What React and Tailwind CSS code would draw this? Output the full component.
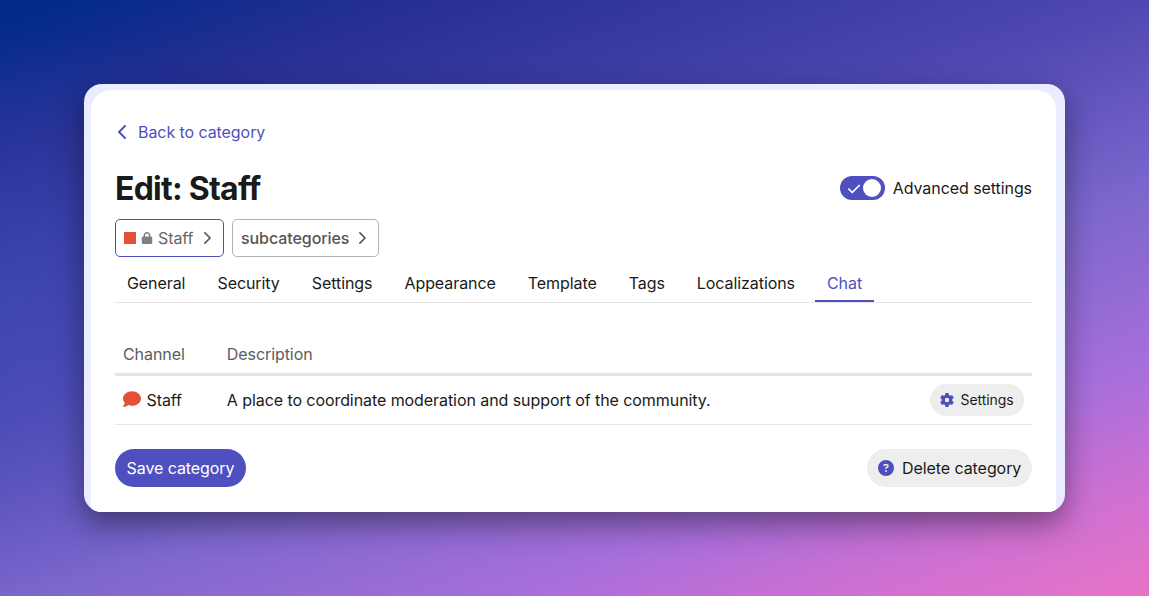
import React from "react";
import { FaCheck, FaLock, FaComment, FaGear, FaCircleQuestion } from "react-icons/fa6";

const tabs = [
  "General",
  "Security",
  "Settings",
  "Appearance",
  "Template",
  "Tags",
  "Localizations",
  "Chat",
];

function Chevron({ left = false, className }) {
  return (
    <svg
      viewBox="0 0 8 14"
      fill="none"
      stroke="currentColor"
      strokeWidth="1.9"
      strokeLinecap="round"
      strokeLinejoin="round"
      className={className}
    >
      <path d={left ? "M7 1 1 7l6 6" : "M1 1l6 6-6 6"} />
    </svg>
  );
}

function Breadcrumbs() {
  return (
    <div className="flex gap-2">
      <button className="flex h-[38px] w-[109px] items-center rounded-[5px] border border-[#4f4fc0] pl-2 text-[#666666]">
        <span className="size-3 bg-[#e25037]" />
        <FaLock className="ml-[5px] size-3 text-[#808080]" />
        <span className="ml-[5px]">Staff</span>
        <Chevron className="ml-[10.5px] h-3 w-[7px] text-[#555555]" />
      </button>
      <button className="flex h-[38px] w-[147px] items-center rounded-[5px] border border-[#b3b3b3] pl-2 font-medium text-[#555555]">
        <span>subcategories</span>
        <Chevron className="ml-[10px] h-3 w-[7px]" />
      </button>
    </div>
  );
}

function Tabs() {
  return (
    <nav className="mt-[7px] flex h-[39px] gap-2 border-b border-[#e4e4e4]">
      {tabs.map((tab) => (
        <a
          key={tab}
          className={
            tab === "Chat"
              ? "flex h-[38px] items-center border-b-2 border-[#4f4fc0] px-3 pt-[2px] text-[#4f4fc0]"
              : "flex h-[38px] items-center border-b-2 border-transparent px-3 pt-[2px]"
          }
        >
          {tab}
        </a>
      ))}
    </nav>
  );
}

function Channels() {
  return (
    <div className="mt-[31px]">
      <div className="flex h-[42px] items-center border-b-[3px] border-[#e4e4e4] px-2 text-[#5c5c5c]">
        <span className="w-[103.8px]">Channel</span>
        <span>Description</span>
      </div>
      <div className="flex h-[49px] items-center border-b border-[#e4e4e4] px-2">
        <span className="flex w-[103.8px] items-center">
          <FaComment className="mb-[2px] mr-[5.5px] size-[18px] text-[#e25037]" />
          Staff
        </span>
        <span className="grow">
          A place to coordinate moderation and support of the community.
        </span>
        <button className="flex h-8 w-[94px] items-center rounded-full bg-[#eeeeee] pl-[10px] text-sm">
          <FaGear className="mr-[6.5px] size-[14px] text-[#4f4fc0]" />
          Settings
        </button>
      </div>
    </div>
  );
}

export default function App() {
  return (
    <div className="h-[596px] w-[1149px] bg-[radial-gradient(ellipse_320px_280px_at_0%_52%,rgba(64,88,205,0.35),rgba(64,88,205,0)),linear-gradient(160deg,#00298a_0%,#042b8b_3%,#262f92_15%,#4f48b0_41%,#7c67cd_60%,#a76edb_77%,#cc70d2_88%,#e873c8_100%)] px-[84px] pt-[84px] font-[Inter,sans-serif] text-base tracking-[-0.072px] text-[#1a1a1a]">
      <div className="h-[428px] overflow-hidden rounded-[18px] bg-[#eaedff] pl-[7px] pr-[9px] pt-[6px] shadow-[0_12px_30px_rgba(0,0,0,0.42)]">
        <main className="flex h-[422px] flex-col rounded-t-[20px] bg-white px-6 pt-[30px]">
          <a className="flex h-6 items-center text-[#4f4fc0]">
            <Chevron left className="ml-[3px] mr-3 h-[14px] w-2" />
            Back to category
          </a>
          <header className="mt-[23px] flex h-[42px] items-center justify-between">
            <h1 className="pt-px text-[32px] font-bold tracking-[-0.75px]">Edit: Staff</h1>
            <div className="flex items-center gap-2">
              <span className="flex h-6 w-[45px] items-center justify-between rounded-full bg-[#4f4fc0] pl-[7px] pr-1">
                <FaCheck className="mt-px size-[14px] text-white" />
                <span className="size-[18px] rounded-full bg-white" />
              </span>
              Advanced settings
            </div>
          </header>
          <div className="pt-[10px]">
            <Breadcrumbs />
          </div>
          <Tabs />
          <Channels />
          <footer className="mt-6 flex justify-between">
            <button className="h-[38px] w-[131px] rounded-full bg-[#4f4fc0] text-white">
              Save category
            </button>
            <button className="flex h-[38px] w-[165px] items-center rounded-full bg-[#eeeeee] pl-[11px]">
              <FaCircleQuestion className="mr-2 size-4 text-[#4f4fc0]" />
              Delete category
            </button>
          </footer>
        </main>
      </div>
    </div>
  );
}
